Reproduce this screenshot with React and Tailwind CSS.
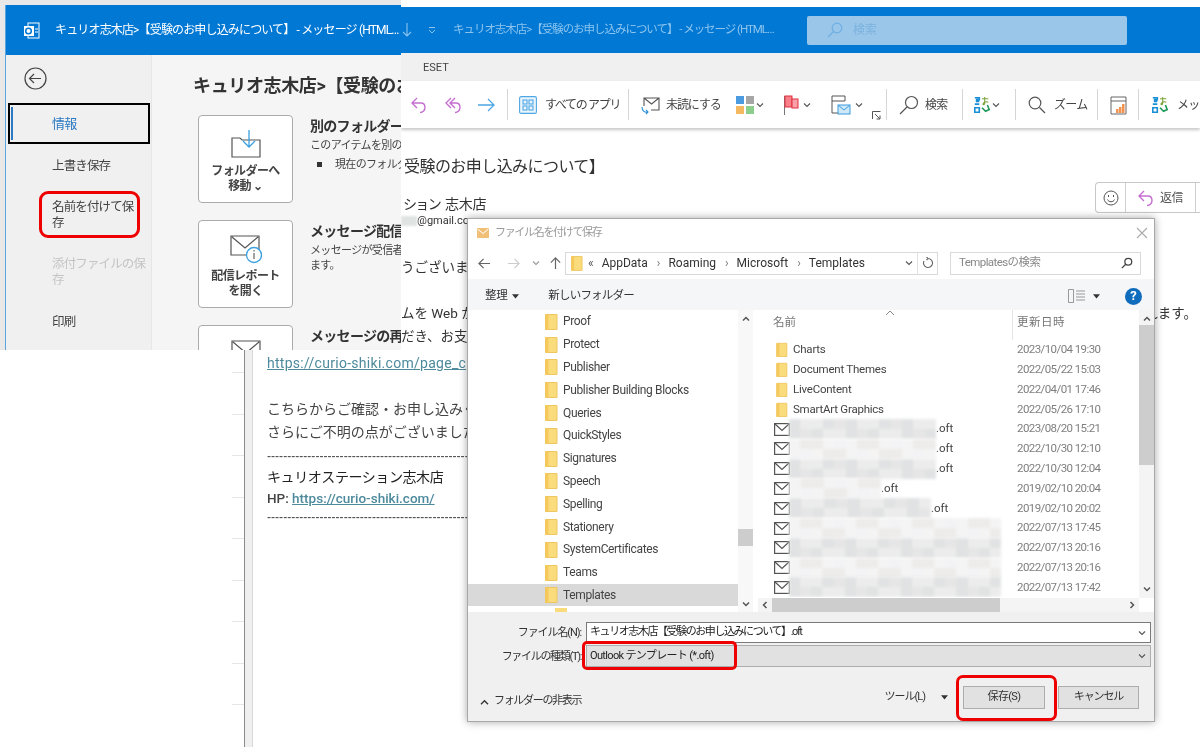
import React from "react";

const Folder = ({ className = "w-[13px] h-[17px]" }) => (
  <svg viewBox="0 0 13 17" className={`shrink-0 ${className}`}>
    <path d="M0.5 1.5h11.5v15H0.5z" fill="#fbdc7d" stroke="#eec65f" />
    <path d="M0.5 1.5h3v15h-3z" fill="#f5c95c" />
  </svg>
);
const Mail = () => (
  <svg viewBox="0 0 16 13" className="w-[16px] h-[13px] shrink-0" fill="#fff" stroke="#555" strokeWidth="1.2">
    <rect x="0.6" y="0.6" width="14.8" height="11.8" />
    <path d="M1 1l7 6.5L15 1" fill="none" />
  </svg>
);
const Chevron = ({ className = "", color = "#555" }) => (
  <svg viewBox="0 0 8 8" className={`w-[8px] h-[8px] shrink-0 ${className}`} fill="none" stroke={color} strokeWidth="1.1">
    <path d="M1 2.5l3 3 3-3" />
  </svg>
);
const Tri = ({ className = "" }) => (
  <svg viewBox="0 0 9 6" className={`w-[7px] h-[5px] shrink-0 ${className}`}><path d="M0 0h9L4.5 5.5z" fill="#333" /></svg>
);
const Reply = ({ double }) => (
  <svg viewBox="0 0 20 20" className="w-[20px] h-[20px] shrink-0" fill="none" stroke="#c56fd0" strokeWidth="1.4">
    <path d={double ? "M8 3L3 8l5 5M12 3L7 8l5 5M7 8h6c3 0 4 2 4 4.500s-2 5-5 5" : "M8 3L3 8l5 5M3 8h9c3 0 4 2 4 4.500s-2 5-5 5"} />
  </svg>
);
const Translate = () => (
  <svg viewBox="0 0 20 20" className="w-[18px] h-[20px] shrink-0" fill="none" strokeWidth="1.8">
    <path d="M2 2h5v2H4v2h3M2 9h5M2 13h5v5H2v-5z" stroke="#1b8fd6" />
    <path d="M10 3h7M13 1v7c0 2-2 2-2 1s3-4 6-2" stroke="#7ba43b" strokeWidth="1.2" />
    <path d="M10 13l4 4 4-2-2-5" stroke="#1f9a5b" />
  </svg>
);
const Sep = ({ className = "" }) => <div className={`w-px h-[31px] bg-[#d6d6d6] shrink-0 ${className}`} />;

const treeItems = ["Proof", "Protect", "Publisher", "Publisher Building Blocks", "Queries", "QuickStyles", "Signatures", "Speech", "Spelling", "Stationery", "SystemCertificates", "Teams", "Templates"];
const dirs = [["Charts", "2023/10/04 19:30"], ["Document Themes", "2022/05/22 15:03"], ["LiveContent", "2022/04/01 17:46"], ["SmartArt Graphics", "2022/05/26 17:10"]];
const files = [[147, true, "2023/08/20 15:21"], [147, true, "2022/10/30 12:10"], [147, true, "2022/10/30 12:04"], [92, true, "2019/02/10 20:04"], [142, true, "2019/02/10 20:02"], [212, false, "2022/07/13 17:45"], [212, false, "2022/07/13 20:16"], [212, false, "2022/07/13 20:16"], [212, false, "2022/07/13 17:42"]];
const greys = ["#f4f4f4", "#ececec", "#f0f0f0", "#e6e6e6", "#f8f8f8", "#e0e2e3", "#eeecea", "#d2d6d8", "#f3f3f5", "#e8e6e5"];

const Pixels = ({ width, seed }) => {
  const n = Math.floor(width / 11);
  return (
    <div className="grid grid-rows-2 grid-flow-col blur-[1.5px] h-[20px] shrink-0" style={{ width, gridTemplateColumns: `repeat(${n}, 1fr)` }}>
      {Array.from({ length: n * 2 }, (_, i) => (
        <div key={i} style={{ backgroundColor: greys[(i * i * 3 + i * 7 + seed * 5) % greys.length] }} />
      ))}
    </div>
  );
};

const Highlight = ({ className }) => <div className={`absolute border-[3px] border-[#ee0000] ${className}`} />;

const BackstageButton = ({ icon, children }) => (
  <div className="w-[95px] h-[88px] shrink-0 bg-white border border-[#ababab] rounded-[4px] flex flex-col items-center pt-[13px]">
    {icon}
    <div className="mt-[5px] text-[12px] leading-[15px] font-bold text-[#444] text-center tracking-[-0.05em]">{children}</div>
  </div>
);

const BackstageRow = ({ icon, button, title, children }) => (
  <div className="flex gap-[17px] mb-[17px]">
    <BackstageButton icon={icon}>{button}</BackstageButton>
    <div className="pt-[1px] whitespace-nowrap">
      <div className="text-[14px] leading-[20px] font-bold text-[#333] tracking-[-0.05em]">{title}</div>
      <div className="text-[11px] leading-[15px] mt-[2px] text-[#444] tracking-[-0.06em]">{children}</div>
    </div>
  </div>
);

function BackstageWindow() {
  return (
    <div className="absolute left-[5px] top-[5px] w-[396px] h-[345px] overflow-hidden flex flex-col bg-[#f5f5f5] border-l border-[#5aa5e0]">
      <div className="h-[50px] shrink-0 bg-[#0078d4] flex items-center pl-[17px] text-white whitespace-nowrap">
        <svg viewBox="0 0 17 17" className="w-[17px] h-[17px] shrink-0">
          <rect x="5" y="1" width="11" height="15" fill="none" stroke="#fff" />
          <rect x="1" y="4" width="10" height="10" fill="#fff" />
          <circle cx="5.500" cy="9" r="2.800" fill="none" stroke="#0078d4" strokeWidth="1.500" />
          <path d="M12 7h3M12 10h3" stroke="#fff" />
        </svg>
        <span className="ml-[15px] text-[12px] tracking-[-0.07em]">キュリオ志木店&gt;【受験のお申し込みについて】 - メッセージ (HTML…</span>
      </div>
      <div className="flex flex-1 min-h-0">
        <div className="w-[146px] shrink-0 bg-[#f0f0f0] border-r border-[#e6e6e6] text-[12.5px] text-[#444] tracking-[-0.07em]">
          <div className="ml-[18px] mt-[12px] w-[23px] h-[23px]">
            <svg viewBox="0 0 23 23" className="w-[23px] h-[23px]" fill="none" stroke="#444" strokeWidth="1.2">
              <circle cx="11.500" cy="11.500" r="10.500" />
              <path d="M17 11.500H6M10 7l-4.500 4.500L10 16" />
            </svg>
          </div>
          <div className="ml-[2px] mt-[13px] w-[142px] h-[41px] border-2 border-black flex items-center pl-[42px] text-[#2b79c2] text-[13px] relative">
            <div className="absolute left-[1px] top-[2px] bottom-[2px] w-[2px] bg-[#2b79c2]" />
            情報
          </div>
          <div className="pl-[46px] mt-[13px] leading-[18px]">上書き保存</div>
          <div className="pl-[46px] mt-[24px] leading-[15.500px]">名前を付けて保<br />存</div>
          <div className="pl-[46px] mt-[26px] leading-[15.500px] text-[#c4c4c4]">添付ファイルの保<br />存</div>
          <div className="pl-[46px] mt-[26px] leading-[18px]">印刷</div>
        </div>
        <div className="flex-1 min-w-0 pl-[46px] overflow-hidden">
          <div className="-ml-[5px] mt-[17px] mb-[15px] text-[18px] leading-[28px] font-bold text-[#333] whitespace-nowrap tracking-[-0.02em]">キュリオ志木店&gt;【受験のお申し込みについて】</div>
          <BackstageRow
            title="別のフォルダーへ移動"
            button={<>フォルダーへ<br />移動 ⌄</>}
            icon={
              <svg viewBox="0 0 30 30" className="w-[30px] h-[30px]" fill="none">
                <path d="M1 9h8l2 2h18v17H1z" stroke="#555" strokeWidth="1.200" />
                <path d="M18 1v17M12 12l6 6 6-6" stroke="#3ba0e0" strokeWidth="1.300" />
              </svg>
            }
          >
            <div>このアイテムを別のフォルダーに移動します。</div>
            <div className="mt-[4px] flex"><span className="ml-[7px] mr-[13px] w-[5px] h-[5px] mt-[5px] bg-[#333]" />現在のフォルダー: 受信トレイ</div>
          </BackstageRow>
          <BackstageRow
            title="メッセージ配信レポート"
            button={<>配信レポート<br />を開く</>}
            icon={
              <svg viewBox="0 0 32 30" className="w-[32px] h-[30px]" fill="none">
                <path d="M1 2h28v19H1zM2 3l13 11L28 3" stroke="#555" strokeWidth="1.200" />
                <circle cx="24" cy="21" r="7.500" fill="#fff" stroke="#3ba0e0" strokeWidth="1.300" />
                <path d="M24 19v6M24 16v1.500" stroke="#444" />
              </svg>
            }
          >
            <div>メッセージが受信者に配信されたことを確認し</div>
            <div>ます。</div>
          </BackstageRow>
          <BackstageRow
            title="メッセージの再送信"
            button=""
            icon={
              <svg viewBox="0 0 30 30" className="w-[30px] h-[30px]" fill="none">
                <path d="M1 2h28v19H1zM2 3l13 11L28 3" stroke="#555" strokeWidth="1.200" />
              </svg>
            }
          />
        </div>
      </div>
    </div>
  );
}

const RibbonText = ({ children, className = "" }) => (
  <span className={`text-[12px] text-[#444] whitespace-nowrap tracking-[-0.06em] shrink-0 ${className}`}>{children}</span>
);

function MessageWindow() {
  return (
    <div className="absolute left-[401px] top-0 right-0 h-[350px] overflow-hidden flex flex-col bg-white">
      <div className="h-[7px] shrink-0" />
      <div className="h-[46px] shrink-0 bg-[#0078d4] flex items-center text-[#8cc4ee] whitespace-nowrap">
        <svg viewBox="0 0 10 16" className="ml-[1px] w-[10px] h-[16px] shrink-0" fill="none" stroke="#8cc4ee" strokeWidth="1.100"><path d="M5 1v13M1 10l4 4 4-4" /></svg>
        <svg viewBox="0 0 8 8" className="ml-[16px] w-[8px] h-[8px] shrink-0" fill="none" stroke="#8cc4ee"><path d="M1 1.500h6M1 4l3 3 3-3" /></svg>
        <span className="ml-[17px] w-[322px] shrink-0 text-[11.500px] tracking-[-0.09em]">キュリオ志木店&gt;【受験のお申し込みについて】 - メッセージ (HTML…</span>
        <div className="ml-[32px] w-[320px] h-[29px] shrink-0 bg-[#99c6e9] rounded-[2px] flex items-center pl-[20px] text-[12px] text-[#7cb3e0]">
          <svg viewBox="0 0 16 16" className="w-[16px] h-[16px]" fill="none" stroke="#6eaee2" strokeWidth="1.200"><circle cx="10" cy="6" r="4.800" /><path d="M6.500 9.500L1 15" /></svg>
          <span className="ml-[10px]">検索</span>
        </div>
      </div>
      <div className="h-[28px] shrink-0 bg-[#f0f0f0] pl-[22px] pt-[3px] flex items-center text-[11px] text-[#444]">ESET</div>
      <div className="h-[47px] shrink-0 bg-white flex items-center shadow-[0_2px_3px_rgba(0,0,0,0.22)] z-10 overflow-hidden pl-[8px]">
        <div className="w-[34px] shrink-0"><Reply /></div>
        <div className="w-[33px] shrink-0"><Reply double /></div>
        <svg viewBox="0 0 20 20" className="w-[20px] h-[20px] shrink-0" fill="none" stroke="#4ea7e4" strokeWidth="1.300"><path d="M2 10h16M12 4l6 6-6 6" /></svg>
        <Sep className="ml-[11px]" />
        <svg viewBox="0 0 18 18" className="ml-[11px] w-[18px] h-[18px] shrink-0" fill="none" stroke="#4ea7e4" strokeWidth="1.100">
          <rect x="0.600" y="0.600" width="16.800" height="16.800" rx="1.500" fill="#eaf5fc" />
          <rect x="4" y="4" width="4" height="4" /><rect x="10" y="4" width="4" height="4" /><rect x="4" y="10" width="4" height="4" /><rect x="10" y="10" width="4" height="4" />
        </svg>
        <RibbonText className="ml-[8px] w-[75px] !tracking-[-0.11em]">すべての アプリ</RibbonText>
        <Sep className="ml-[8px]" />
        <svg viewBox="0 0 20 20" className="ml-[11px] w-[20px] h-[20px] shrink-0" fill="none" strokeWidth="1.100">
          <path d="M4 11V3h15v12h-8M4 3l7.500 6L19 3" stroke="#555" />
          <path d="M2 12c0 4 3 6 6 5M6 15l2 2-2 2" stroke="#2a8fd6" />
        </svg>
        <RibbonText className="ml-[6px] w-[57px] !tracking-[-0.09em]">未読にする</RibbonText>
        <svg viewBox="0 0 18 18" className="ml-[13px] w-[18px] h-[18px] shrink-0">
          <rect x="0" y="0" width="8" height="8" fill="#4a9be0" /><rect x="10" y="0" width="8" height="8" fill="#a6a6a6" />
          <rect x="0" y="10" width="8" height="8" fill="#f4b860" /><rect x="10" y="10" width="8" height="8" fill="#8ccf8c" />
        </svg>
        <Chevron className="ml-[2px]" />
        <svg viewBox="0 0 16 20" className="ml-[19px] w-[16px] h-[20px] shrink-0" fill="none">
          <path d="M1.500 1v19" stroke="#777" /><rect x="2" y="1" width="7" height="11" fill="#f97f8a" stroke="#e0303f" /><rect x="9" y="4" width="6" height="9" fill="#f9a0a8" stroke="#e0303f" />
        </svg>
        <Chevron className="ml-[4px]" />
        <svg viewBox="0 0 20 20" className="ml-[20px] w-[20px] h-[20px] shrink-0" fill="none">
          <path d="M1 1h13v5H1zM1 6v12h6" stroke="#555" /><rect x="7" y="10" width="12" height="9" fill="#cfe8f8" stroke="#3a9be0" /><path d="M7 10l6 5 6-5" stroke="#3a9be0" />
        </svg>
        <Chevron className="ml-[4px]" />
        <svg viewBox="0 0 9 9" className="ml-[9px] mt-[22px] w-[9px] h-[9px] shrink-0" fill="none" stroke="#555"><path d="M0.500 8V0.500H8.500M3 3l5 5M8 4.500V8H4.500" /></svg>
        <Sep className="ml-[5px]" />
        <svg viewBox="0 0 20 20" className="ml-[12px] w-[20px] h-[20px] shrink-0" fill="none" stroke="#555" strokeWidth="1.200"><circle cx="12.500" cy="7.500" r="6" /><path d="M8 12L1 19" /></svg>
        <RibbonText className="ml-[6px] w-[26px]">検索</RibbonText>
        <Sep className="ml-[11px]" />
        <div className="ml-[10px] shrink-0"><Translate /></div>
        <Chevron className="ml-[1px]" />
        <Sep className="ml-[15px]" />
        <svg viewBox="0 0 18 18" className="ml-[12px] w-[18px] h-[18px] shrink-0" fill="none" stroke="#555" strokeWidth="1.200"><circle cx="7" cy="7" r="5.800" /><path d="M11.500 11.500L17 17" /></svg>
        <RibbonText className="ml-[8px] w-[32px]">ズーム</RibbonText>
        <Sep className="ml-[11px]" />
        <svg viewBox="0 0 18 20" className="ml-[12px] w-[18px] h-[20px] shrink-0" fill="none">
          <path d="M1 2h15v17H1zM1 6h15" stroke="#666" /><rect x="9" y="12" width="2.500" height="6" fill="#f2924e" /><rect x="12" y="9" width="2.500" height="9" fill="#f2924e" /><rect x="6" y="14" width="2.500" height="4" fill="#f2924e" />
        </svg>
        <Sep className="ml-[10px]" />
        <div className="ml-[12px] shrink-0"><Translate /></div>
        <RibbonText className="ml-[8px]">メッセージ</RibbonText>
      </div>
      <div className="flex-1 min-h-0 relative text-[#333] whitespace-nowrap">
        <div className="pt-[27px] pl-[3px] text-[16px] leading-[24px] tracking-[-0.035em]">受験のお申し込みについて】</div>
        <div className="flex items-start h-[31px] mt-[3px]">
          <span className="pl-[2px] mt-[14px] leading-[16px] text-[14px] tracking-[-0.12em]">ション</span>
          <span className="ml-[5px] mt-[14px] leading-[16px] text-[14px] tracking-[-0.02em]">志木店</span>
          <div className="ml-auto w-[105px] h-[31px] border border-r-0 border-[#c8c8c8] rounded-l-[4px] flex items-center">
            <svg viewBox="0 0 16 16" className="ml-[7px] w-[16px] h-[16px] shrink-0" fill="none" stroke="#555"><circle cx="8" cy="8" r="7" /><path d="M4.500 9.500c1 3 6 3 7 0" /><path d="M5.500 5v2M10.500 5v2" /></svg>
            <div className="ml-[6px] w-px h-full bg-[#d0d0d0]" />
            <div className="ml-[10px]"><Reply /></div>
            <span className="ml-[4px] text-[12px] text-[#555] tracking-[-0.04em]">返信</span>
            <div className="ml-auto mr-[4px] w-px h-full bg-[#d0d0d0]" />
          </div>
        </div>
        <div className="flex items-center h-[14px] mt-[1px] text-[11px]">
          <div className="w-[16px] h-[10px] bg-[#dfe4e2] blur-[1px]" />
          <span>@gmail.com</span>
        </div>
        <div className="mt-[29px] text-[13.500px] leading-[20px]">うございます。</div>
        <div className="mt-[26px] text-[13.500px] leading-[20px] flex justify-between">
          <span>ムを Web からご確認いただけます。</span>
          <span className="pr-[3px]">れます。</span>
        </div>
        <div className="mt-[3px] text-[13.500px] leading-[20px]">だき、お支払い方法をご確認ください。</div>
      </div>
    </div>
  );
}

const BackTicks = [372, 414, 456, 497, 539, 581, 622, 664, 705];

function BodyWindow() {
  return (
    <div className="absolute left-0 top-[350px] right-0 bottom-0 bg-white overflow-hidden flex">
      <div className="w-[244px] shrink-0 flex flex-col">
        {BackTicks.map((y, i) => (
          <div key={y} className={`ml-[232px] h-px bg-[#e6e6e6] ${i === 0 ? "mt-[22px]" : "mt-[40.500px]"}`} />
        ))}
      </div>
      <div className="w-[9px] shrink-0 bg-[#efefef] border-l border-[#8a8a8a] border-r-[#d8d8d8] border-r" />
      <div className="pl-[14px] text-[14px] text-[#444] whitespace-nowrap overflow-hidden w-[220px]">
        <div className="h-[26px] leading-[26px] text-[#4d8a9c] underline tracking-[0.02em]">https://curio-shiki.com/page_c</div>
        <div className="mt-[22px] leading-[23px]">こちらからご確認・お申し込みください。</div>
        <div className="leading-[23px]">さらにご不明の点がございましたら</div>
        <div className="leading-[14px] mt-[6px] text-[11px] font-semibold text-[#555] overflow-hidden">------------------------------------------------------------------------</div>
        <div className="leading-[22px] mt-[2px] text-[#222] tracking-[-0.03em]">キュリオステーション志木店</div>
        <div className="leading-[20px] text-[13.500px]"><span className="font-medium">HP: </span><span className="text-[#4d8a9c] underline font-medium">https://curio-shiki.com/</span></div>
        <div className="leading-[14px] mt-[3px] text-[11px] font-semibold text-[#555] overflow-hidden">------------------------------------------------------------------------</div>
      </div>
    </div>
  );
}

function SaveDialog() {
  return (
    <div className="absolute left-[467px] top-[218px] w-[688px] h-[504px] bg-white border border-[#a8a8a8] shadow-[0_0_8px_rgba(0,0,0,0.35)] flex flex-col text-[11.500px] text-[#333]">
      <div className="h-[28px] shrink-0 flex items-center pl-[9px] pr-[6px] text-[#999]">
        <svg viewBox="0 0 12 10" className="w-[12px] h-[10px] shrink-0"><rect width="12" height="10" fill="#f0c078" /><path d="M0.500 1l5.500 4.500L11.500 1" fill="none" stroke="#fff" /></svg>
        <span className="ml-[6px] text-[11px] tracking-[-0.12em]">ファイル名を付けて保存</span>
        <svg viewBox="0 0 12 12" className="ml-auto w-[12px] h-[12px] shrink-0" fill="none" stroke="#aaa" strokeWidth="1.100"><path d="M1 1l10 10M11 1L1 11" /></svg>
      </div>
      <div className="h-[32px] shrink-0 flex items-center">
        <svg viewBox="0 0 14 14" className="ml-[10px] w-[13px] h-[13px] shrink-0" fill="none" stroke="#666" strokeWidth="1.300"><path d="M13 7H1M6 2L1 7l5 5" /></svg>
        <svg viewBox="0 0 14 14" className="ml-[16px] w-[13px] h-[13px] shrink-0" fill="none" stroke="#ccc" strokeWidth="1.300"><path d="M1 7h12M8 2l5 5-5 5" /></svg>
        <Chevron className="ml-[12px]" color="#999" />
        <svg viewBox="0 0 14 14" className="ml-[9px] w-[13px] h-[13px] shrink-0" fill="none" stroke="#666" strokeWidth="1.300"><path d="M7 13V1M2 6l5-5 5 5" /></svg>
        <div className="ml-[3px] w-[373px] h-[23px] shrink-0 border border-[#d9d9d9] flex items-center pl-[5px] text-[12px] whitespace-nowrap">
          <Folder className="w-[12px] h-[16px]" />
          <span className="ml-[5px] text-[#555]">«</span>
          <span className="ml-[8px]">AppData</span>
          <span className="ml-[9px] text-[#777]">›</span>
          <span className="ml-[8px]">Roaming</span>
          <span className="ml-[9px] text-[#777]">›</span>
          <span className="ml-[8px]">Microsoft</span>
          <span className="ml-[9px] text-[#777]">›</span>
          <span className="ml-[8px]">Templates</span>
          <Chevron className="ml-auto mr-[4px]" />
          <div className="w-px h-[21px] bg-[#e2e2e2] mr-[4px]" />
          <svg viewBox="0 0 12 12" className="w-[12px] h-[12px] mr-[3px] shrink-0" fill="none" stroke="#666" strokeWidth="1.100"><path d="M6 1.500A4.500 4.500 0 1 1 2 4M6 1.500L4.500 0M6 1.500L4.500 3" /></svg>
        </div>
        <div className="ml-[12px] w-[191px] h-[23px] shrink-0 border border-[#d9d9d9] flex items-center pl-[8px] pr-[7px] text-[#888] tracking-[-0.05em] whitespace-nowrap">
          <span>Templatesの検索</span>
          <svg viewBox="0 0 14 14" className="ml-auto w-[12px] h-[12px] shrink-0" fill="none" stroke="#444" strokeWidth="1.500"><circle cx="8.500" cy="5.500" r="4" /><path d="M5.500 8.500L1 13" /></svg>
        </div>
      </div>
      <div className="h-[31px] shrink-0 bg-[#f5f6f7] flex items-center text-[#333] pt-[3px]">
        <span className="ml-[17px] tracking-[-0.03em]">整理</span>
        <Tri className="ml-[5px]" />
        <span className="ml-[29px] tracking-[-0.07em]">新しいフォルダー</span>
        <svg viewBox="0 0 17 14" className="ml-auto w-[17px] h-[14px] shrink-0" fill="none" stroke="#999"><path d="M0.500 0.500h5v13h-5zM8 2h9M8 5h9M8 8h9M8 11h9" /></svg>
        <Tri className="ml-[8px]" />
        <div className="ml-[25px] mr-[12px] w-[17px] h-[17px] rounded-full bg-[#0f6cbd] text-white text-[13px] font-bold flex items-center justify-center">?</div>
      </div>
      <div className="h-[302px] shrink-0 flex bg-white">
        <div className="w-[270px] shrink-0 overflow-hidden">
          {treeItems.map((t, i) => (
            <div key={t} className={`h-[22.800px] flex items-center pl-[77px] text-[12px] text-[#444] tracking-[-0.03em] ${i === 12 ? "bg-[#d9d9d9]" : ""}`}>
              <Folder />
              <span className="ml-[5px] whitespace-nowrap">{t}</span>
            </div>
          ))}
          <div className="h-[6px] pl-[87px] flex pt-[2px]"><div className="w-[12px] h-[4px] bg-[#fbdc7d]" /></div>
        </div>
        <div className="w-[15px] shrink-0 bg-[#f8f8f8] flex flex-col items-center">
          <svg viewBox="0 0 8 8" className="mt-[5px] w-[8px] h-[8px] shrink-0" fill="none" stroke="#555" strokeWidth="1.500"><path d="M1 5.500l3-3 3 3" /></svg>
          <div className="mt-[206px] w-full h-[17px] bg-[#cdcdcd]" />
          <svg viewBox="0 0 8 8" className="mt-[54px] w-[8px] h-[8px] shrink-0" fill="none" stroke="#555" strokeWidth="1.500"><path d="M1 2.500l3 3 3-3" /></svg>
        </div>
        <div className="w-[5px] shrink-0" />
        <div className="flex-1 min-w-0 flex flex-col">
          <div className="flex-1 min-h-0 flex">
            <div className="flex-1 min-w-0 flex flex-col overflow-hidden">
              <div className="h-[30px] shrink-0 flex relative text-[#777]">
                <span className="ml-[15px] mt-[4px]">名前</span>
                <svg viewBox="0 0 10 6" className="absolute left-[127px] top-0 w-[10px] h-[6px]" fill="none" stroke="#888"><path d="M1 5l4-4 4 4" /></svg>
                <div className="ml-auto w-[127px] border-l border-[#e5e5e5] pl-[4px] pt-[4px] tracking-[0.04em]">更新日時</div>
              </div>
              <div className="overflow-hidden">
                {dirs.map(([n, d]) => (
                  <div key={n} className="h-[19.800px] flex items-center pl-[18px] text-[#444]">
                    <Folder className="w-[12px] h-[15px]" />
                    <span className="ml-[5px] whitespace-nowrap tracking-[-0.02em]">{n}</span>
                    <span className="ml-auto w-[122px] text-[#7f7f7f] tracking-[-0.05em] whitespace-nowrap">{d}</span>
                  </div>
                ))}
                {files.map(([w, oft, d], i) => (
                  <div key={i} className="h-[19.800px] flex items-center pl-[16px] text-[#444]">
                    <Mail />
                    <div className="-ml-[1px]"><Pixels width={w} seed={i + 1} /></div>
                    {oft && <span className="whitespace-nowrap">.oft</span>}
                    <span className="ml-auto w-[122px] text-[#7f7f7f] tracking-[-0.05em] whitespace-nowrap">{d}</span>
                  </div>
                ))}
              </div>
            </div>
            <div className="w-[15px] shrink-0 bg-[#f4f4f4] flex flex-col items-center">
              <svg viewBox="0 0 8 8" className="mt-[5px] w-[8px] h-[8px] shrink-0" fill="none" stroke="#555" strokeWidth="1.500"><path d="M1 5.500l3-3 3 3" /></svg>
              <div className="mt-[2px] w-full h-[140px] bg-[#cdcdcd]" />
              <svg viewBox="0 0 8 8" className="mt-auto mb-[5px] w-[8px] h-[8px] shrink-0" fill="none" stroke="#555" strokeWidth="1.500"><path d="M1 2.500l3 3 3-3" /></svg>
            </div>
          </div>
          <div className="h-[14px] shrink-0 flex items-center bg-[#f4f4f4] mr-[15px]">
            <svg viewBox="0 0 8 8" className="ml-[3px] w-[8px] h-[8px] shrink-0" fill="none" stroke="#555" strokeWidth="1.500"><path d="M5.500 1l-3 3 3 3" /></svg>
            <div className="ml-[3px] w-[228px] h-full bg-[#cdcdcd]" />
            <svg viewBox="0 0 8 8" className="ml-auto mr-[3px] w-[8px] h-[8px] shrink-0" fill="none" stroke="#555" strokeWidth="1.500"><path d="M2.500 1l3 3-3 3" /></svg>
          </div>
        </div>
      </div>
      <div className="flex-1 min-h-0 bg-[#f0f0f0] flex flex-col text-[11px]">
        <div className="mt-[10px] h-[21px] flex items-center">
          <span className="w-[114px] text-right pr-[1px] pt-[2px] tracking-[-0.1em] shrink-0 whitespace-nowrap">ファイル名(N):</span>
          <div className="ml-[4px] w-[565px] h-[21px] bg-white border border-[#7a7a7a] flex items-center pl-[3px] pr-[4px] tracking-[-0.13em] text-[#222] whitespace-nowrap">
            キュリオ志木店【受験のお申し込みについて】.oft
            <Chevron className="ml-auto" />
          </div>
        </div>
        <div className="mt-[2px] h-[22px] flex items-center">
          <span className="w-[114px] text-right pr-[1px] pt-[2px] tracking-[-0.12em] shrink-0 whitespace-nowrap">ファイルの種類(T):</span>
          <div className="ml-[4px] w-[565px] h-[22px] bg-[#e1e1e1] border border-[#adadad] flex items-center pl-[3px] pr-[4px] tracking-[-0.06em] text-[#222] whitespace-nowrap">
            Outlook テンプレート (*.oft)
            <Chevron className="ml-auto" />
          </div>
        </div>
        <div className="mt-[19px] h-[23px] flex items-center whitespace-nowrap">
          <svg viewBox="0 0 10 8" className="ml-[12px] mt-[9px] w-[9px] h-[7px] shrink-0" fill="none" stroke="#333" strokeWidth="1.500"><path d="M1 6l4-4 4 4" /></svg>
          <span className="ml-[5px] mt-[8px] tracking-[-0.12em]">フォルダーの非表示</span>
          <span className="ml-auto tracking-[-0.09em]">ツール(L)</span>
          <Tri className="ml-[16px]" />
          <div className="ml-[15px] w-[82px] h-[23px] bg-[#e1e1e1] border border-[#adadad] flex items-center justify-center tracking-[-0.06em]">保存(S)</div>
          <div className="ml-[13px] mr-[15px] w-[81px] h-[23px] bg-[#e1e1e1] border border-[#adadad] flex items-center justify-center tracking-[-0.1em]">キャンセル</div>
        </div>
      </div>
    </div>
  );
}

export default function App() {
  return (
    <div className="relative w-[1200px] h-[747px] overflow-hidden bg-white font-['Roboto','Noto_Sans_CJK_JP',sans-serif] blur-[0.4px]">
      <div className="absolute left-0 top-0 w-[401px] h-[350px] bg-[#e8e8e8]" />
      <BackstageWindow />
      <BodyWindow />
      <MessageWindow />
      <SaveDialog />
      <Highlight className="left-[39px] top-[191px] w-[101px] h-[47px] rounded-[9px]" />
      <Highlight className="left-[582px] top-[641px] w-[155px] h-[29px] rounded-[5px]" />
      <Highlight className="left-[956px] top-[675px] w-[101px] h-[46px] rounded-[7px]" />
    </div>
  );
}
